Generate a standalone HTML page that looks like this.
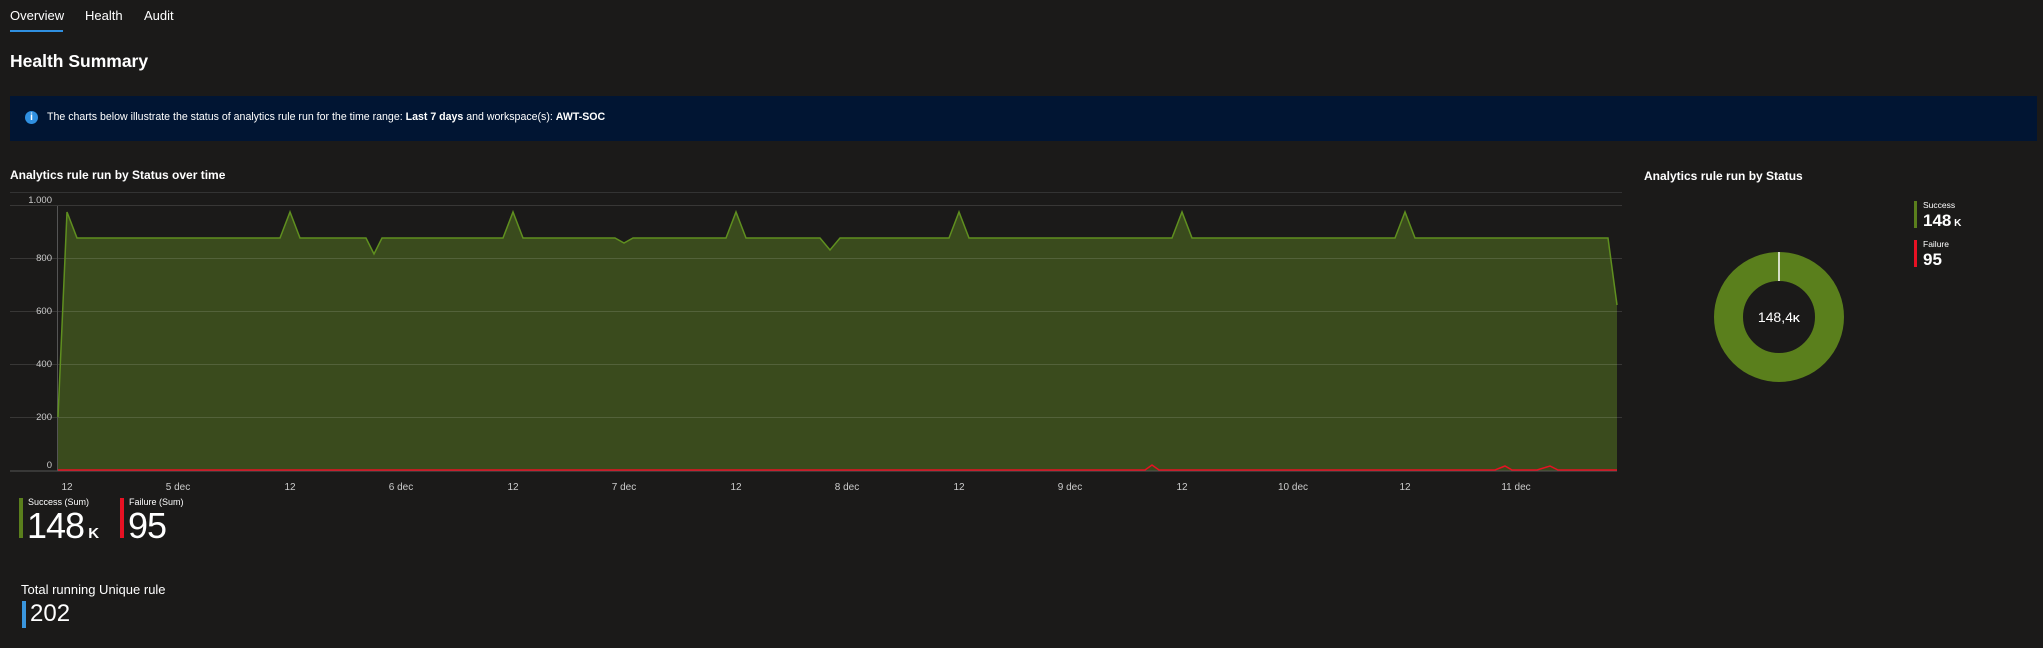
<!DOCTYPE html>
<html><head><meta charset="utf-8"><style>
body{margin:0;width:2043px;height:648px;background:#1b1a19;font-family:"Liberation Sans",sans-serif;color:#fff;position:relative;overflow:hidden}
.a{position:absolute;white-space:nowrap}
</style></head><body>
<div class="a" style="left:10px;top:8px;font-size:13px;">Overview</div>
<div class="a" style="left:10px;top:30px;width:53px;height:2px;background:#2f8fe0"></div>
<div class="a" style="left:85px;top:8px;font-size:13px;">Health</div>
<div class="a" style="left:144px;top:8px;font-size:13px;">Audit</div>
<div class="a" style="left:10px;top:51px;font-size:17.5px;font-weight:bold;">Health Summary</div>
<div class="a" style="left:10px;top:96px;width:2027px;height:45px;background:#011533"></div>
<div class="a" style="left:25px;top:111px;width:13px;height:13px;border-radius:50%;background:#2f8fe0;font-size:10px;font-weight:bold;text-align:center;line-height:13px">i</div>
<div class="a" style="left:47px;top:111px;font-size:10.6px;">The charts below illustrate the status of analytics rule run for the time range: <b>Last 7 days</b> and workspace(s): <b>AWT-SOC</b></div>
<div class="a" style="left:10px;top:168px;font-size:12px;font-weight:bold;">Analytics rule run by Status over time</div>
<div class="a" style="left:1644px;top:169px;font-size:12px;font-weight:bold;">Analytics rule run by Status</div>
<svg class="a" style="left:0;top:0" width="2043" height="648">
<line x1="10" y1="192.5" x2="1622" y2="192.5" stroke="#333" />
<path d="M58,471 L58,417 L67,212 L77,238 L280,238 L290,212 L300,238 L366,238 L374,254 L382,238 L503,238 L513,212 L523,238 L615,238 L624,243 L633,238 L726,238 L736,212 L746,238 L820,238 L830,250 L840,238 L949,238 L959,212 L969,238 L1172,238 L1182,212 L1192,238 L1395,238 L1405,212 L1415,238 L1608,238 L1617,305 L1617,471 Z" fill="#3a4b1d"/>
<g stroke="rgba(255,255,255,0.13)" stroke-width="1">
<line x1="10" y1="205.5" x2="1622" y2="205.5"/><line x1="10" y1="258.5" x2="1622" y2="258.5"/><line x1="10" y1="311.5" x2="1622" y2="311.5"/><line x1="10" y1="364.5" x2="1622" y2="364.5"/><line x1="10" y1="417.5" x2="1622" y2="417.5"/>
</g>
<line x1="10" y1="471" x2="1617" y2="471" stroke="#555"/>
<line x1="57.5" y1="206" x2="57.5" y2="471" stroke="#555"/>
<path d="M58,417 L67,212 L77,238 L280,238 L290,212 L300,238 L366,238 L374,254 L382,238 L503,238 L513,212 L523,238 L615,238 L624,243 L633,238 L726,238 L736,212 L746,238 L820,238 L830,250 L840,238 L949,238 L959,212 L969,238 L1172,238 L1182,212 L1192,238 L1395,238 L1405,212 L1415,238 L1608,238 L1617,305" fill="none" stroke="#5f8f1f" stroke-width="1.5"/>
<path d="M58,470 L1145,470 L1152,465 L1159,470 L1495,470 L1505,466 L1512,470 L1537,470 L1550,466 L1558,470 L1617,470" fill="none" stroke="#e81123" stroke-width="1.5"/>
<g font-size="9.5" fill="#ccc" text-anchor="end">
<text x="52" y="203">1.000</text><text x="52" y="261">800</text><text x="52" y="314">600</text><text x="52" y="367">400</text><text x="52" y="420">200</text><text x="52" y="468">0</text>
</g>
<g font-size="10" fill="#ccc" text-anchor="middle">
<text x="67" y="490">12</text><text x="178" y="490">5 dec</text><text x="290" y="490">12</text><text x="401" y="490">6 dec</text><text x="513" y="490">12</text><text x="624" y="490">7 dec</text><text x="736" y="490">12</text><text x="847" y="490">8 dec</text><text x="959" y="490">12</text><text x="1070" y="490">9 dec</text><text x="1182" y="490">12</text><text x="1293" y="490">10 dec</text><text x="1405" y="490">12</text><text x="1516" y="490">11 dec</text>
</g>
<circle cx="1779" cy="317" r="50.5" fill="none" stroke="#5a7f1c" stroke-width="29"/>
<line x1="1779" y1="252" x2="1779" y2="281" stroke="#fff" stroke-width="1.5"/>
<text x="1779" y="322" font-size="14" fill="#fff" text-anchor="middle">148,4<tspan font-size="10" font-weight="bold">K</tspan></text>
</svg>
<div class="a" style="left:1914px;top:201px;width:3px;height:27px;background:#5a7f1c"></div>
<div class="a" style="left:1923px;top:200px;font-size:8.5px;">Success</div>
<div class="a" style="left:1923px;top:211px;font-size:17px;font-weight:bold;">148<span style="font-size:10px"> K</span></div>
<div class="a" style="left:1914px;top:240px;width:3px;height:27px;background:#e81123"></div>
<div class="a" style="left:1923px;top:239px;font-size:8.5px;">Failure</div>
<div class="a" style="left:1923px;top:250px;font-size:17px;font-weight:bold;">95</div>
<div class="a" style="left:19px;top:498px;width:4px;height:40px;background:#5a7f1c"></div>
<div class="a" style="left:28px;top:497px;font-size:9px;">Success (Sum)</div>
<div class="a" style="left:27px;top:505px;font-size:36px;letter-spacing:-1px">148<span style="font-size:15px;font-weight:bold;letter-spacing:0"> K</span></div>
<div class="a" style="left:120px;top:498px;width:4px;height:40px;background:#e81123"></div>
<div class="a" style="left:129px;top:497px;font-size:9px;">Failure (Sum)</div>
<div class="a" style="left:128px;top:505px;font-size:36px;letter-spacing:-1px">95</div>
<div class="a" style="left:21px;top:582px;font-size:13px;">Total running Unique rule</div>
<div class="a" style="left:22px;top:601px;width:4px;height:27px;background:#3a96dd"></div>
<div class="a" style="left:30px;top:600px;font-size:24px;">202</div>
</body></html>
